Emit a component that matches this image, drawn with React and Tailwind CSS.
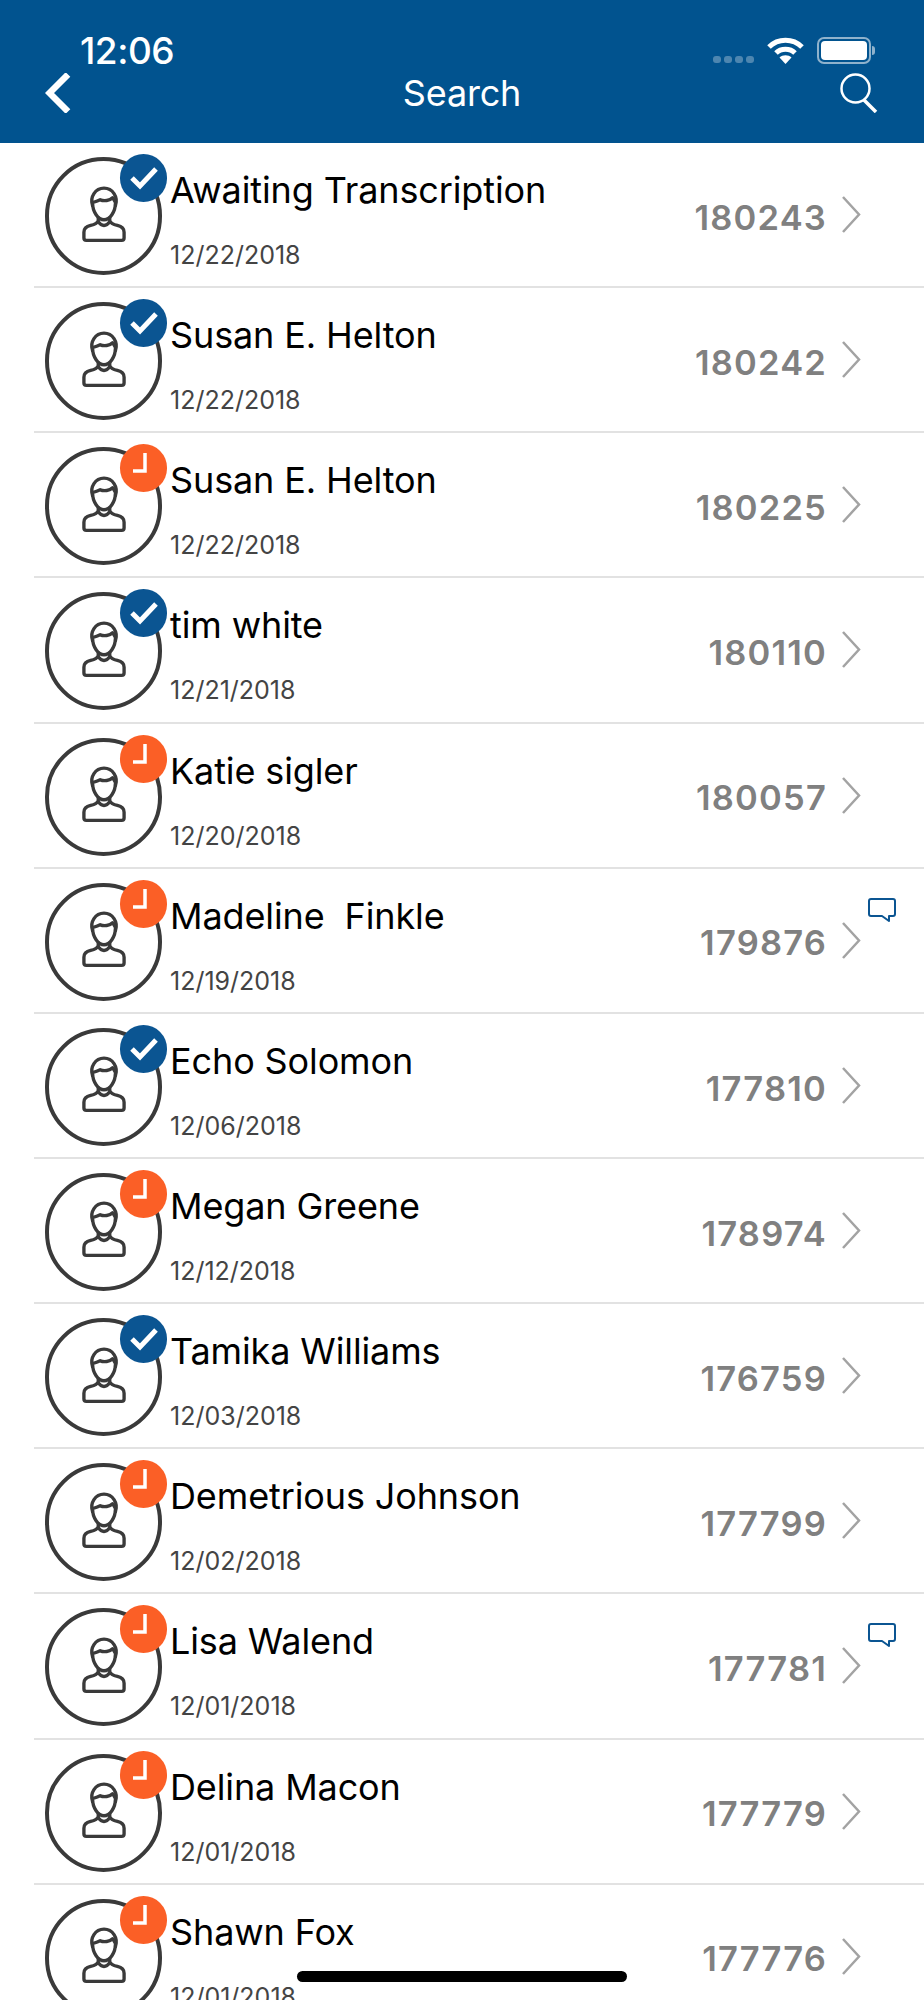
const ROWS = [
  { name: "Awaiting Transcription", date: "12/22/2018", num: "180243", done: true },
  { name: "Susan E. Helton", date: "12/22/2018", num: "180242", done: true },
  { name: "Susan E. Helton", date: "12/22/2018", num: "180225" },
  { name: "tim white", date: "12/21/2018", num: "180110", done: true },
  { name: "Katie sigler", date: "12/20/2018", num: "180057" },
  { name: "Madeline  Finkle", date: "12/19/2018", num: "179876", comment: true },
  { name: "Echo Solomon", date: "12/06/2018", num: "177810", done: true },
  { name: "Megan Greene", date: "12/12/2018", num: "178974" },
  { name: "Tamika Williams", date: "12/03/2018", num: "176759", done: true },
  { name: "Demetrious Johnson", date: "12/02/2018", num: "177799" },
  { name: "Lisa Walend", date: "12/01/2018", num: "177781", comment: true },
  { name: "Delina Macon", date: "12/01/2018", num: "177779" },
  { name: "Shawn Fox", date: "12/01/2018", num: "177776" },
];

function Person() {
  return (
    <svg className="mb-[5px]" width="44" height="56" viewBox="0 0 46 58" fill="none" stroke="#3a3a3a" strokeWidth="3.500" strokeLinejoin="round" strokeLinecap="round">
      <path d="M11 20c-3-9 3-18 12-18s15 9 12 18" />
      <path d="M11 17c0 10 6 18 12 18s12-8 12-18c-1-2-2-4-3-5-3 3-9 4-13 2-2 1-5 2-8 3z" />
      <path d="M17 33v3c-1 3-4 4-8 5-4 1-7 3-7 7v6c0 1.500 1 2.500 2.500 2.500h37c1.500 0 2.500-1 2.500-2.500v-6c0-4-3-6-7-7-4-1-7-2-8-5v-3" />
      <path d="M17 37c2 3 4 4 6 4s4-1 6-4" />
    </svg>
  );
}

function Badge({ done }) {
  return (
    <div className={`absolute left-[71px] top-[-7px] w-[47px] h-[48px] rounded-full flex items-center justify-center ${done ? "bg-[#0b5592]" : "bg-[#fb5f26]"}`}>
      {done ? (
        <svg width="30" height="24" viewBox="0 0 30 24" fill="none" stroke="#fff" strokeWidth="5">
          <path d="M3 12l8 8L27 3" />
        </svg>
      ) : (
        <svg width="47" height="48" viewBox="0 0 47 48" fill="none" stroke="#fff" strokeWidth="3.500">
          <path d="M25 9v18H13" />
        </svg>
      )}
    </div>
  );
}

function Row({ row }) {
  return (
    <div className="relative h-[145.15px] shrink-0 pl-[34px]">
      <div className="flex h-full border-b-2 border-[#e2e2e2] pl-[11px] pt-[14px]">
        <div className="relative w-[117px] h-[118px] shrink-0 rounded-full border-[4px] border-[#3a3a3a] flex items-center justify-center">
          <Person />
          <Badge done={row.done} />
        </div>
        <div className="ml-[8px] flex-1 flex flex-col">
          <div className="text-[36px] leading-[44px] mt-[11px] text-black tracking-[-0.12px] whitespace-pre">{row.name}</div>
          <div className="text-[25px] leading-[30px] mt-[28px] text-[#444444]">{row.date}</div>
        </div>
        <div className="flex items-center pb-[14px] pr-[63px]">
          <span className="text-[34.500px] font-semibold text-[#808080] mt-[6px] tracking-[1.2px]">{row.num}</span>
          <svg className="ml-[14px]" width="20" height="37" viewBox="0 0 20 37" fill="none" stroke="#a3a3a3" strokeWidth="2.500">
            <path d="M2 1l16 17.500L2 36" />
          </svg>
        </div>
      </div>
      {row.comment && (
        <svg className="absolute left-[868px] top-[29px]" width="28" height="25" viewBox="0 0 28 25" fill="none" stroke="#0b5592" strokeWidth="2" strokeLinejoin="round">
          <path d="M3 1h22a2 2 0 0 1 2 2v13a2 2 0 0 1-2 2h-4v5l-7-5H3a2 2 0 0 1-2-2V3a2 2 0 0 1 2-2z" />
        </svg>
      )}
    </div>
  );
}

export default function App() {
  return (
    <div className="relative w-[924px] h-[2000px] overflow-hidden bg-white font-['Inter',sans-serif]">
      {/* header */}
      <div className="h-[143px] bg-[#01538f] text-white flex flex-col">
        <div className="flex items-center h-[30px] mt-[35px] pl-[80px] pr-[49px]">
          <span className="text-[37px] font-medium leading-none tracking-[-0.5px]">12:06</span>
          <div className="ml-auto flex items-end gap-[3px] h-[26px]">
            {[0, 1, 2, 3].map((i) => (
              <div key={i} className="w-[8px] h-[7px] rounded-[3px] bg-[#4d86b0]" />
            ))}
          </div>
          <svg className="ml-[13px]" width="37" height="27" viewBox="0 0 37 27" fill="none" stroke="#fff" strokeWidth="5">
            <path d="M2 10c9-9 24-9 33 0" />
            <path d="M9 16c5-5 14-5 19 0" />
            <path d="M18.500 27l-6-6.500c3-3 9-3 12 0z" fill="#fff" stroke="none" />
          </svg>
          <div className="ml-[13px] w-[54px] h-[27px] rounded-[7px] border-[2px] border-[#8fb2cc] p-[2px]">
            <div className="w-full h-full rounded-[4px] bg-white" />
          </div>
          <div className="w-[3px] h-[9px] ml-[1px] rounded-r-full bg-[#8fb2cc]" />
        </div>
        <div className="flex items-center h-[46px] mt-[5px] pl-[45px] pr-[46px]">
          <svg width="26" height="40" viewBox="0 0 26 40" fill="none" stroke="#fff" strokeWidth="6.500">
            <path d="M23 1.500L4.500 20 23 38.500" />
          </svg>
          <span className="flex-1 text-center text-[36px] leading-none text-white pl-[13px] tracking-[-0.2px]">Search</span>
          <svg width="38" height="40" viewBox="0 0 38 40" fill="none" stroke="#fff" strokeWidth="2.500">
            <circle cx="15.500" cy="15.500" r="14" />
            <path d="M24 27l12 12" strokeWidth="3.500" />
          </svg>
        </div>
      </div>

      {/* list */}
      <div className="flex flex-col">
        {ROWS.map((row, i) => (
          <Row key={i} row={row} />
        ))}
      </div>

      {/* home indicator */}
      <div className="absolute left-[297px] top-[1971px] w-[330px] h-[11px] rounded-full bg-black" />
    </div>
  );
}
